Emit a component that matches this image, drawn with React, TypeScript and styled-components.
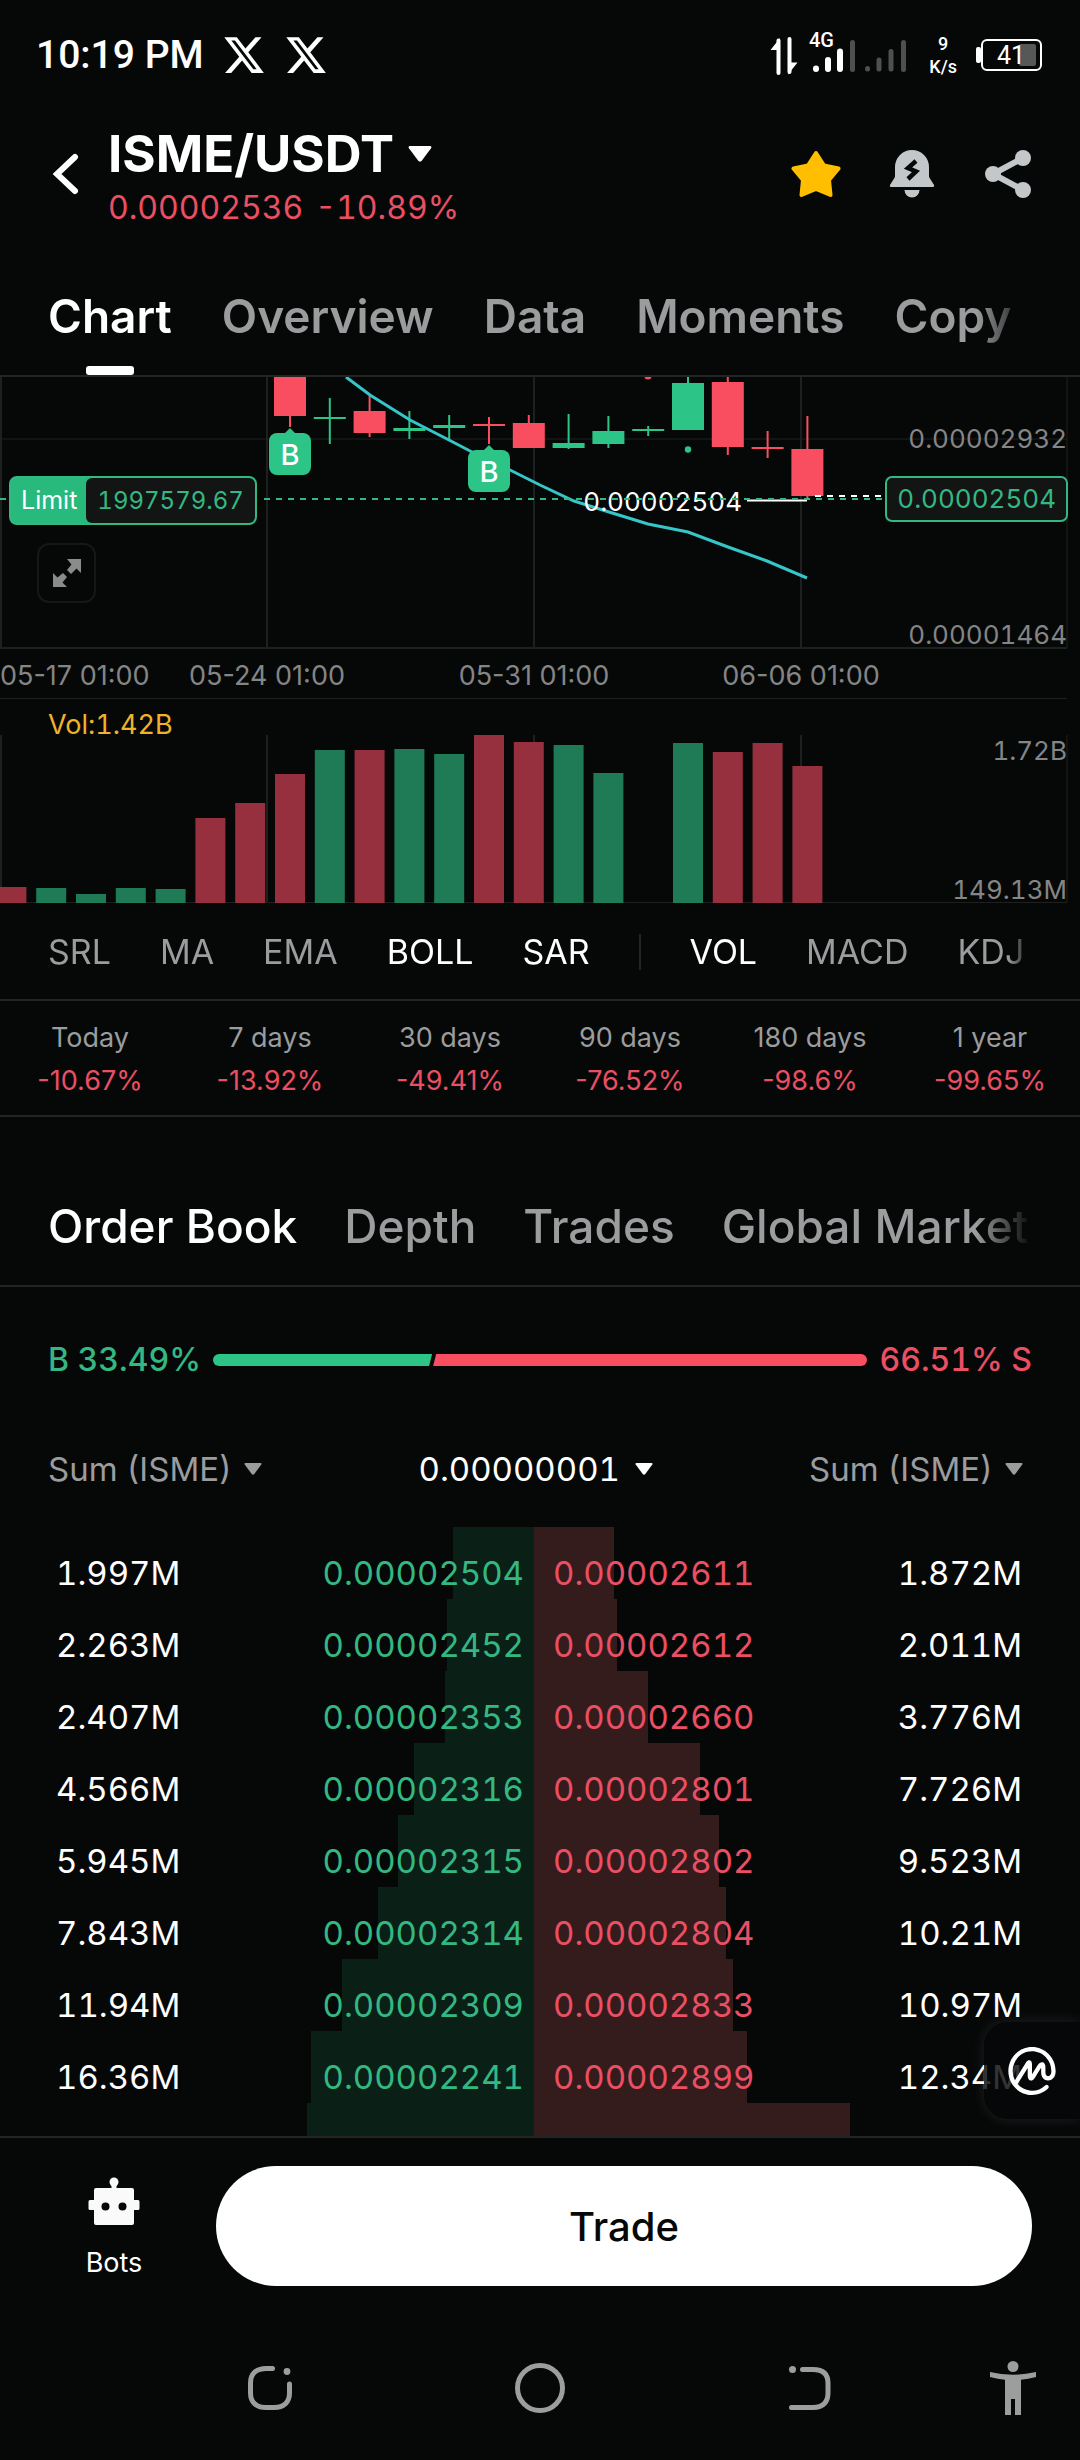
import React from "react";
import styled, { createGlobalStyle } from "styled-components";
import { FaXTwitter } from "react-icons/fa6";
import { SiCoinmarketcap } from "react-icons/si";

const color = {
  bg: "#060807",
  line: "#232525",
  white: "#ffffff",
  muted: "#9b9c9e",
  axis: "#848586",
  icon: "#c4c7ca",
  green: "#2dc487",
  greenText: "#34b883",
  red: "#f84e60",
  redText: "#ea4f63",
  volGreen: "#1f7a56",
  volRed: "#96303f",
  bid: "#0a2017",
  ask: "#341c1c",
};

const GlobalStyle = createGlobalStyle`
  * { box-sizing: border-box; }
  body {
    margin: 0;
    background: ${color.bg};
    color: ${color.white};
    font-family: Inter, "Liberation Sans", sans-serif;
  }
  button, select {
    font: inherit;
    color: inherit;
    background: none;
    border: 0;
    margin: 0;
    padding: 0;
    white-space: nowrap;
  }
  svg { display: block; }
`;

const Page = styled.div`
  width: 100%;
  overflow: hidden;
  font-variant-numeric: tabular-nums;
`;

/* ---------- status bar ---------- */

const StatusBar = styled.div`
  height: 110px;
  padding: 0 38px 0 36px;
  display: flex;
  align-items: center;
  justify-content: space-between;
  font-family: Roboto, "Liberation Sans", sans-serif;
`;

const StatusGroup = styled.div<{ $gap: number }>`
  display: flex;
  align-items: center;
  gap: ${(p) => p.$gap}px;
`;

const Clock = styled.span`
  font-size: 39px;
  line-height: 48px;
  font-weight: 500;
  font-variant-numeric: normal;
`;

const NetSpeed = styled.div`
  font-size: 18px;
  line-height: 23px;
  font-weight: 500;
  text-align: center;
`;

/* ---------- header ---------- */

const Header = styled.header`
  height: 128px;
  padding: 0 47px 0 52px;
  display: flex;
  align-items: center;
`;

const IconButton = styled.button`
  display: flex;
  align-items: center;
  justify-content: center;
`;

const PairBlock = styled.div`
  flex: 1;
  margin-left: 28px;
  display: flex;
  flex-direction: column;
  align-items: flex-start;
  gap: 4px;
`;

const PairButton = styled.button`
  display: flex;
  align-items: center;
  gap: 14px;
  font-size: 51px;
  line-height: 64px;
  font-weight: 700;
`;

const PairPrice = styled.div`
  display: flex;
  gap: 12px;
  font-size: 32px;
  line-height: 36px;
  color: ${color.redText};
`;

const HeaderActions = styled.div`
  display: flex;
  gap: 46px;
`;

/* ---------- tab strips ---------- */

const TabBar = styled.nav<{ $top: number }>`
  border-bottom: 2px solid ${color.line};
  padding: ${(p) => p.$top}px 48px 0;
`;

const TabStrip = styled.div<{ $gap: number }>`
  display: flex;
  gap: ${(p) => p.$gap}px;
  overflow: hidden;
  mask-image: linear-gradient(to right, #000 calc(100% - 56px), transparent);
`;

const Tab = styled.button<{ $active?: boolean; $weight: number }>`
  position: relative;
  padding-bottom: 31px;
  font-size: 46px;
  line-height: 56px;
  font-weight: ${(p) => p.$weight};
  color: ${(p) => (p.$active ? color.white : color.muted)};
`;

const TabMark = styled.span`
  position: absolute;
  bottom: 0;
  left: 50%;
  width: 48px;
  height: 9px;
  margin-left: -24px;
  border-radius: 3px;
  background: ${color.white};
`;

/* ---------- chart ---------- */

const ChartBox = styled.section`
  position: relative;
`;

const ChartSvg = styled.svg`
  width: 100%;
  height: auto;
  font-size: 27px;
`;

const DateLabels = styled.g`
  font-variant-numeric: normal;
`;

const LimitTag = styled.button`
  position: absolute;
  left: 9px;
  top: 99px;
  height: 49px;
  display: flex;
  border: 2px solid ${color.greenText};
  border-radius: 8px;
  background: #28b97c;
  font-size: 24px;
  line-height: 45px;
`;

const LimitName = styled.span`
  padding: 0 9px 0 10px;
  font-size: 25px;
  color: ${color.white};
`;

const LimitAmount = styled.span`
  padding: 0 11px;
  border-radius: 6px;
  background: #131414;
  color: ${color.greenText};
`;

const PriceTag = styled.div`
  position: absolute;
  right: 12px;
  top: 99px;
  padding: 0 10px;
  border: 2px solid ${color.greenText};
  border-radius: 7px;
  background: #131414;
  font-size: 26px;
  line-height: 42px;
  color: ${color.greenText};
`;

const ExpandButton = styled(IconButton)`
  position: absolute;
  left: 37px;
  top: 166px;
  width: 59px;
  height: 60px;
  border: 2px solid #151718;
  border-radius: 12px;
`;

/* ---------- indicators and period stats ---------- */

const IndicatorBar = styled.div`
  padding: 0 48px;
  border-bottom: 2px solid ${color.line};
`;

const IndicatorStrip = styled.div`
  display: flex;
  align-items: center;
  gap: 49px;
  height: 95px;
  overflow: hidden;
  mask-image: linear-gradient(to right, #000 calc(100% - 24px), transparent);
`;

const Indicator = styled.button<{ $active?: boolean }>`
  font-size: 34px;
  line-height: 40px;
  color: ${(p) => (p.$active ? color.white : color.muted)};
`;

const Divider = styled.span`
  flex: none;
  width: 2px;
  height: 36px;
  background: ${color.line};
`;

const Stats = styled.dl`
  margin: 0;
  height: 116px;
  padding-top: 20px;
  display: grid;
  grid-template-columns: repeat(6, 1fr);
  border-bottom: 2px solid ${color.line};
  text-align: center;
  font-size: 27px;
  line-height: 34px;
  font-variant-numeric: normal;
`;

const StatName = styled.dt`
  color: ${color.muted};
`;

const StatValue = styled.dd`
  margin: 9px 0 0;
  color: ${color.redText};
`;

/* ---------- order book ---------- */

const Ratio = styled.div`
  display: flex;
  align-items: center;
  gap: 12px;
  padding: 53px 48px 0;
  font-size: 32px;
  line-height: 40px;
  font-weight: 500;
`;

const RatioText = styled.span<{ $tone: string }>`
  color: ${(p) => p.$tone};
`;

const RatioBar = styled.div`
  flex: 1;
  display: flex;
  height: 12px;
  border-radius: 6px;
  overflow: hidden;
`;

const BuyShare = styled.div`
  background: ${color.green};
  clip-path: polygon(0 0, 100% 0, calc(100% - 3px) 100%, 0 100%);
`;

const SellShare = styled.div`
  flex: 1;
  background: ${color.red};
  clip-path: polygon(4px 0, 100% 0, 100% 100%, 1px 100%);
`;

const BookControls = styled.div`
  display: grid;
  grid-template-columns: 1fr auto 1fr;
  padding: 69px 57px 38px 48px;
  font-size: 33px;
  line-height: 40px;
`;

const SelectBox = styled.label<{ $align: string; $tone: string; $gap: number }>`
  justify-self: ${(p) => p.$align};
  display: flex;
  align-items: center;
  gap: ${(p) => p.$gap}px;
  color: ${(p) => p.$tone};
`;

const PlainSelect = styled.select`
  appearance: none;
  outline: none;
`;

const BookArea = styled.div`
  position: relative;
  padding-right: 12px;
`;

const BookTable = styled.table`
  width: 100%;
  table-layout: fixed;
  border-collapse: collapse;
  font-size: 33px;
  line-height: 40px;
`;

const BookRow = styled.tr<{ $peek?: boolean }>`
  height: ${(p) => (p.$peek ? 33 : 72)}px;
`;

const Cell = styled.td<{ $tone?: string; $align: string; $pad: string }>`
  padding: ${(p) => p.$pad};
  text-align: ${(p) => p.$align};
  color: ${(p) => p.$tone ?? color.white};
`;

const FloatingWidget = styled.button`
  position: absolute;
  right: 0;
  top: 495px;
  width: 96px;
  height: 97px;
  padding-left: 24px;
  border-radius: 24px 0 0 24px;
  background: rgba(6, 7, 9, 0.82);
  box-shadow: 0 0 14px rgba(190, 195, 220, 0.14);
  font-size: 48px;
  color: ${color.white};
`;

/* ---------- bottom bars ---------- */

const ActionBar = styled.footer`
  position: relative;
  display: flex;
  align-items: flex-start;
  gap: 36px;
  padding: 28px 48px 30px;
  border-top: 2px solid ${color.line};
  background: ${color.bg};
`;

const BotsButton = styled.button`
  width: 132px;
  padding-top: 11px;
  display: flex;
  flex-direction: column;
  align-items: center;
  gap: 21px;
  font-size: 27px;
  line-height: 34px;
`;

const TradeButton = styled.button`
  flex: 1;
  height: 120px;
  border-radius: 60px;
  background: ${color.white};
  color: ${color.bg};
  font-size: 40px;
  font-weight: 500;
`;

const SystemNav = styled.nav`
  height: 144px;
  display: grid;
  grid-template-columns: 2fr 2fr 2fr 1fr;
  padding-left: 12.5%;
  place-items: center;
  color: #9c9d9d;
`;

/* ---------- data ---------- */

const STEP = 39.8;
const slotX = (slot: number) => 11.4 + slot * STEP;

type Candle = { slot: number; up: boolean; high: number; low: number; top: number; bottom: number };

const candles: Candle[] = [
  { slot: 7, up: false, high: 370, low: 427, top: 370, bottom: 416 },
  { slot: 8, up: true, high: 398, low: 444, top: 417, bottom: 419 },
  { slot: 9, up: false, high: 396, low: 437, top: 411, bottom: 433 },
  { slot: 10, up: true, high: 411, low: 439, top: 428, bottom: 431 },
  { slot: 11, up: true, high: 415, low: 439, top: 425, bottom: 428 },
  { slot: 12, up: false, high: 417, low: 444, top: 424, bottom: 426 },
  { slot: 13, up: false, high: 415, low: 448, top: 423, bottom: 448 },
  { slot: 14, up: true, high: 414, low: 449, top: 443, bottom: 448 },
  { slot: 15, up: true, high: 416, low: 448, top: 431, bottom: 444 },
  { slot: 16, up: true, high: 426, low: 436, top: 429, bottom: 431 },
  { slot: 17, up: true, high: 370, low: 430, top: 383, bottom: 430 },
  { slot: 18, up: false, high: 370, low: 455, top: 382, bottom: 447 },
  { slot: 19, up: false, high: 431, low: 458, top: 447, bottom: 449 },
  { slot: 20, up: false, high: 416, low: 500, top: 449, bottom: 496 },
];

const volumes: [number, boolean, number][] = [
  [0, false, 887], [1, true, 888], [2, true, 894], [3, true, 888], [4, true, 889],
  [5, false, 818], [6, false, 803], [7, false, 774], [8, true, 750], [9, false, 750],
  [10, true, 749], [11, true, 754], [12, false, 735], [13, false, 742], [14, true, 745],
  [15, true, 773], [17, true, 743], [18, false, 752], [19, false, 743], [20, false, 766],
];

const gridX = [1, 267, 534, 801];

const stats = [
  ["Today", "-10.67%"],
  ["7 days", "-13.92%"],
  ["30 days", "-49.41%"],
  ["90 days", "-76.52%"],
  ["180 days", "-98.6%"],
  ["1 year", "-99.65%"],
];

type Level = { bidSum: string; bid: string; ask: string; askSum: string; bidDepth: number; askDepth: number };

/* depths are percentages of the full table width */
const levels: Level[] = [
  { bidSum: "1.997M", bid: "0.00002504", ask: "0.00002611", askSum: "1.872M", bidDepth: 7.6, askDepth: 7.5 },
  { bidSum: "2.263M", bid: "0.00002452", ask: "0.00002612", askSum: "2.011M", bidDepth: 8.1, askDepth: 7.8 },
  { bidSum: "2.407M", bid: "0.00002353", ask: "0.00002660", askSum: "3.776M", bidDepth: 8.3, askDepth: 10.7 },
  { bidSum: "4.566M", bid: "0.00002316", ask: "0.00002801", askSum: "7.726M", bidDepth: 11.2, askDepth: 15.5 },
  { bidSum: "5.945M", bid: "0.00002315", ask: "0.00002802", askSum: "9.523M", bidDepth: 12.7, askDepth: 17.3 },
  { bidSum: "7.843M", bid: "0.00002314", ask: "0.00002804", askSum: "10.21M", bidDepth: 14.6, askDepth: 18 },
  { bidSum: "11.94M", bid: "0.00002309", ask: "0.00002833", askSum: "10.97M", bidDepth: 18, askDepth: 18.6 },
  { bidSum: "16.36M", bid: "0.00002241", ask: "0.00002899", askSum: "12.34M", bidDepth: 20.9, askDepth: 19.9 },
];

const depthFill = (bid: number, ask: number) =>
  `linear-gradient(to right, transparent ${50 - bid}%, ${color.bid} ${50 - bid}% 50%, ${color.ask} 50% ${50 + ask}%, transparent ${50 + ask}%)`;

/* ---------- pieces ---------- */

const Caret = ({ w, h }: { w: number; h: number }) => (
  <svg width={w} height={h} viewBox="0 0 18 12" preserveAspectRatio="none" aria-hidden="true">
    <path d="M1.5 0h15q1.6 0 .8 1.6L10.3 11q-1.3 1.4-2.6 0L.7 1.6Q-.1 0 1.5 0z" fill="currentColor" />
  </svg>
);

const Signals = () => (
  <svg width="141" height="60" viewBox="771 24 141 60" aria-hidden="true">
    <g fill="none" stroke="#fff" strokeWidth="4" strokeLinecap="round">
      <path d="M780.5 39.500V72" />
      <path d="M791.500 38V71" />
    </g>
    <path d="M782 37v12h-9.500z M790 73.500v-12h9.500z" fill="#fff" />
    <text x="811" y="46" fontSize="20" fontWeight="500" fill="#fff">4G</text>
    <g stroke="#fff" strokeWidth="6" strokeLinecap="round">
      <path d="M818 67.500v.5" />
      <path d="M830 59v9" />
      <path d="M842 50.500V68" />
    </g>
    <g stroke="#4e4f4f" strokeWidth="5" strokeLinecap="round">
      <path d="M854.500 41.500v27" />
      <path d="M869.500 67.500v.5" />
      <path d="M881 59v9" />
      <path d="M893 50.500V68" />
      <path d="M905.500 41.500v27" />
    </g>
  </svg>
);

const Battery = () => (
  <svg width="66" height="34" viewBox="0 0 66 34" aria-hidden="true">
    <rect x="0" y="9" width="5" height="16" rx="2" fill="#fff" />
    <rect x="6" y="2" width="59" height="30" rx="5" fill="none" stroke="#fff" strokeWidth="2" />
    <rect x="43" y="6" width="17" height="22" rx="2" fill="#565757" />
    <text x="21" y="26" fontSize="25" fill="#fff">41</text>
  </svg>
);

const BuyMark = ({ x, y }: { x: number; y: number }) => (
  <g>
    <path d={`M${x - 7} ${y + 7}L${x} ${y}L${x + 7} ${y + 7}z`} fill={color.green} />
    <rect x={x - 21} y={y + 5} width="42" height="42" rx="8" fill={color.green} />
    <text x={x} y={y + 37} textAnchor="middle" fontSize="29" fontWeight="500" fill="#fff">B</text>
  </g>
);

const Chart = () => (
  <ChartBox>
    <ChartSvg viewBox="0 377 1080 527" role="img" aria-label="ISME/USDT candlestick chart with volume">
      <g stroke="#1e2020" strokeWidth="2">
        {gridX.map((x) => (
          <path key={x} d={`M${x} 377V648M${x} 735V902`} />
        ))}
        <path d="M0 648H1067" />
        <path d="M0 439H1067M0 698.500H1067M0 902.500H1067M1067 377V648M1067 735V902" strokeWidth="1" />
      </g>
      <g fill={color.axis} textAnchor="end" fontSize="26">
        <text x="1067" y="448">0.00002932</text>
        <text x="1067" y="644">0.00001464</text>
        <text x="1067" y="760">1.72B</text>
        <text x="1067" y="899">149.13M</text>
      </g>
      <DateLabels fill={color.axis} textAnchor="middle">
        <text x="0" y="685" textAnchor="start">05-17 01:00</text>
        <text x="267" y="685">05-24 01:00</text>
        <text x="534" y="685">05-31 01:00</text>
        <text x="801" y="685">06-06 01:00</text>
      </DateLabels>
      <text x="48" y="734" fill="#eeb22b">Vol:1.42B</text>
      {candles.map((c) => {
        const x = slotX(c.slot);
        return (
          <g key={c.slot} fill={c.up ? color.green : color.red}>
            <rect x={x - 1} y={c.high} width="2" height={c.low - c.high} />
            <rect x={x - 16} y={c.top} width="32" height={c.bottom - c.top} />
          </g>
        );
      })}
      <circle cx="648" cy="376" r="3.500" fill={color.red} />
      <circle cx="688" cy="449.500" r="3.200" fill={color.green} />
      <path
        d="M346 377L370 395L410 420L449 440L472 452L510 470L540 485L574 501L609 512L648 524L688 532L728 547L767 561L807 578"
        fill="none"
        stroke="#36c6c9"
        strokeWidth="3"
      />
      <BuyMark x={290} y={428} />
      <BuyMark x={489} y={445} />
      <text x="742" y="511" textAnchor="end" fontSize="26" fill="#fff">0.00002504</text>
      <path d="M747 500.500H807" stroke="#fff" strokeWidth="2" />
      <path d="M815 496H884" stroke="#fff" strokeWidth="2" strokeDasharray="6 6" />
      <path d="M0 499H6M264 499H884" stroke={color.greenText} strokeWidth="2" strokeDasharray="6 6" />
      {volumes.map(([slot, up, top]) => (
        <rect
          key={slot}
          x={slotX(slot) - 15}
          y={top}
          width="30"
          height={903 - top}
          fill={up ? color.volGreen : color.volRed}
        />
      ))}
    </ChartSvg>
    <LimitTag>
      <LimitName>Limit</LimitName>
      <LimitAmount>1997579.67</LimitAmount>
    </LimitTag>
    <PriceTag>0.00002504</PriceTag>
    <ExpandButton aria-label="Full screen">
      <svg width="28" height="28" viewBox="0 0 28 28" fill="#8a8b8b">
        <path d="M14 0H28V14L23.500 9.500L18 15L14 11L18.500 5.500z" />
        <path d="M0 14L4.500 18.500L10 14L14 18L9.500 23.500L14 28H0z" />
      </svg>
    </ExpandButton>
  </ChartBox>
);

const OrderBook = () => (
  <section>
    <Ratio>
      <RatioText $tone={color.greenText}>B 33.49%</RatioText>
      <RatioBar>
        <BuyShare style={{ width: "33.49%" }} />
        <SellShare />
      </RatioBar>
      <RatioText $tone={color.redText}>66.51% S</RatioText>
    </Ratio>
    <BookControls>
      <SelectBox $align="start" $tone={color.muted} $gap={12}>
        <PlainSelect aria-label="Bid quantity">
          <option>Sum (ISME)</option>
        </PlainSelect>
        <Caret w={18} h={12} />
      </SelectBox>
      <SelectBox $align="center" $tone={color.white} $gap={14}>
        <PlainSelect aria-label="Price step">
          <option>0.00000001</option>
        </PlainSelect>
        <Caret w={18} h={12} />
      </SelectBox>
      <SelectBox $align="end" $tone={color.muted} $gap={12}>
        <PlainSelect aria-label="Ask quantity">
          <option>Sum (ISME)</option>
        </PlainSelect>
        <Caret w={18} h={12} />
      </SelectBox>
    </BookControls>
    <BookArea>
      <BookTable>
        <tbody>
          {levels.map((l) => (
            <BookRow key={l.bid} style={{ background: depthFill(l.bidDepth, l.askDepth) }}>
              <Cell $align="left" $pad="20px 0 0 56px">{l.bidSum}</Cell>
              <Cell $align="right" $pad="20px 10px 0 0" $tone={color.greenText}>{l.bid}</Cell>
              <Cell $align="left" $pad="20px 0 0 19px" $tone={color.redText}>{l.ask}</Cell>
              <Cell $align="right" $pad="20px 46px 0 0">{l.askSum}</Cell>
            </BookRow>
          ))}
          <BookRow $peek style={{ background: depthFill(21.3, 29.6) }}>
            <Cell colSpan={4} $align="left" $pad="0" />
          </BookRow>
        </tbody>
      </BookTable>
      <FloatingWidget aria-label="CoinMarketCap">
        <SiCoinmarketcap />
      </FloatingWidget>
    </BookArea>
  </section>
);

export default function App() {
  return (
    <Page>
      <GlobalStyle />
      <StatusBar>
        <StatusGroup $gap={18}>
          <Clock>10:19 PM</Clock>
          <FaXTwitter size={44} />
          <FaXTwitter size={44} />
        </StatusGroup>
        <StatusGroup $gap={19}>
          <Signals />
          <NetSpeed>
            9<br />K/s
          </NetSpeed>
          <Battery />
        </StatusGroup>
      </StatusBar>

      <Header>
        <IconButton aria-label="Back">
          <svg width="28" height="42" viewBox="0 0 28 42" fill="none" stroke="#fff" strokeWidth="6" strokeLinecap="round">
            <path d="M23 4L5 21L23 38" />
          </svg>
        </IconButton>
        <PairBlock>
          <PairButton>
            ISME/USDT
            <Caret w={24} h={16} />
          </PairButton>
          <PairPrice>
            <span>0.00002536</span>
            <span>-10.89%</span>
          </PairPrice>
        </PairBlock>
        <HeaderActions>
          <IconButton aria-label="Favourite">
            <svg width="50" height="50" viewBox="0 0 50 48">
              <path
                d="M25 3L33 15.500L47.500 18.500L38 30L39.500 45L25 39L10.500 45L12 30L2.500 18.500L17 15.500z"
                fill="#ffbf00"
                stroke="#ffbf00"
                strokeWidth="4"
                strokeLinejoin="round"
              />
            </svg>
          </IconButton>
          <IconButton aria-label="Price alert">
            <svg width="50" height="50" viewBox="0 0 50 50" fill={color.icon}>
              <path d="M25 1a17 17 0 0 1 17 17v10l5 8q.8 2-1 2H4q-1.800 0-1-2l5-8V18A17 17 0 0 1 25 1z" />
              <path d="M17.500 41h15a7.500 7.500 0 0 1-15 0z" />
              <path d="M29 12L21 19L29 22.500L21 30" fill="none" stroke={color.bg} strokeWidth="4.500" />
            </svg>
          </IconButton>
          <IconButton aria-label="Share">
            <svg width="50" height="50" viewBox="0 0 50 50" fill={color.icon}>
              <path d="M40 9L10 25L40 41" fill="none" stroke={color.icon} strokeWidth="6" />
              <circle cx="40" cy="9" r="8" />
              <circle cx="10" cy="25" r="8" />
              <circle cx="40" cy="41" r="8" />
            </svg>
          </IconButton>
        </HeaderActions>
      </Header>

      <TabBar $top={50}>
        <TabStrip $gap={50}>
          <Tab $active $weight={600}>
            Chart
            <TabMark />
          </Tab>
          <Tab $weight={600}>Overview</Tab>
          <Tab $weight={600}>Data</Tab>
          <Tab $weight={600}>Moments</Tab>
          <Tab $weight={600}>Copy</Tab>
        </TabStrip>
      </TabBar>

      <Chart />

      <IndicatorBar>
        <IndicatorStrip>
          <Indicator>SRL</Indicator>
          <Indicator>MA</Indicator>
          <Indicator>EMA</Indicator>
          <Indicator $active>BOLL</Indicator>
          <Indicator $active>SAR</Indicator>
          <Divider />
          <Indicator $active>VOL</Indicator>
          <Indicator>MACD</Indicator>
          <Indicator>KDJ</Indicator>
        </IndicatorStrip>
      </IndicatorBar>

      <Stats>
        {stats.map(([name, value]) => (
          <div key={name}>
            <StatName>{name}</StatName>
            <StatValue>{value}</StatValue>
          </div>
        ))}
      </Stats>

      <TabBar $top={81}>
        <TabStrip $gap={47}>
          <Tab $active $weight={500}>Order Book</Tab>
          <Tab $weight={500}>Depth</Tab>
          <Tab $weight={500}>Trades</Tab>
          <Tab $weight={500}>Global Market</Tab>
        </TabStrip>
      </TabBar>

      <OrderBook />

      <ActionBar>
        <BotsButton>
          <svg width="52" height="48" viewBox="0 0 52 48" fill="#fafafa">
            <circle cx="26" cy="5" r="4.500" />
            <path d="M23.500 6h5v6h-5z" />
            <path d="M8 11h36q2 0 2 2v10h4q1.500 0 1.500 1.500v7q0 1.500-1.500 1.500h-4v13q0 2-2 2H8q-2 0-2-2V33H2Q.500 33 .500 31.500v-7Q.500 23 2 23h4V13q0-2 2-2z" />
            <circle cx="17.500" cy="29.500" r="4" fill={color.bg} />
            <circle cx="34.500" cy="29.500" r="4" fill={color.bg} />
          </svg>
          Bots
        </BotsButton>
        <TradeButton>Trade</TradeButton>
      </ActionBar>

      <SystemNav aria-label="System">
        <IconButton aria-label="Recent apps">
          <svg width="50" height="50" viewBox="0 0 50 50" fill="none" stroke="currentColor" strokeWidth="5" strokeLinecap="round">
            <path d="M27.500 5.500H21C11 5.500 5.500 11 5.500 20v10C5.500 39 11 44.500 21 44.500h8C39 44.500 44.500 39 44.500 30V21" />
            <circle cx="42" cy="8.500" r="3.400" fill="currentColor" stroke="none" />
          </svg>
        </IconButton>
        <IconButton aria-label="Home">
          <svg width="50" height="50" viewBox="0 0 50 50" fill="none" stroke="currentColor" strokeWidth="5">
            <circle cx="25" cy="25" r="22.500" />
          </svg>
        </IconButton>
        <IconButton aria-label="Back">
          <svg width="44" height="50" viewBox="0 0 44 50" fill="none" stroke="currentColor" strokeWidth="5" strokeLinecap="round">
            <path d="M14.500 6.500H25C36 6.500 40 12 40 20v10c0 8-4 14.500-15 14.500H3.500" />
            <circle cx="4.500" cy="6.500" r="3.500" fill="currentColor" stroke="none" />
          </svg>
        </IconButton>
        <IconButton aria-label="Accessibility">
          <svg width="48" height="54" viewBox="0 0 48 54" fill="currentColor">
            <circle cx="24" cy="5.500" r="5.500" />
            <path d="M1 11Q24 16.500 47 11v5q-8 2-15 2.800V54h-6V38h-4v16h-6V18.800Q9 18 1 16z" />
          </svg>
        </IconButton>
      </SystemNav>
    </Page>
  );
}
